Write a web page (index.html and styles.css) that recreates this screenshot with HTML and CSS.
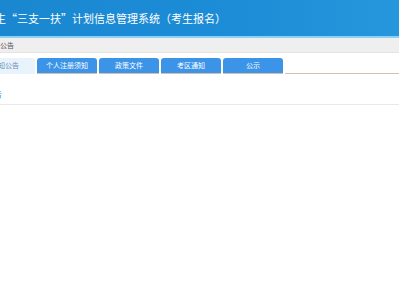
FILE: index.html
```html
<!DOCTYPE html>
<html lang="zh">
<head>
<meta charset="utf-8">
<link rel="stylesheet" href="styles.css">
</head>
<body>
<div class="page">
  <header class="header">
    <h1 class="title">生“三支一扶”计划信息管理系统（考生报名）</h1>
  </header>
  <div class="crumb">通知公告</div>
  <nav class="tabs">
    <div class="tab active">通知公告</div>
    <div class="tab">个人注册须知</div>
    <div class="tab">政策文件</div>
    <div class="tab">考区通知</div>
    <div class="tab">公示</div>
    <div class="tab-rest"></div>
  </nav>
  <section class="content">
    <div class="content-title">通知公告</div>
  </section>
</div>
</body>
</html>
```

FILE: styles.css
```css
html, body {
  margin: 0;
  padding: 0;
  background: #ffffff;
  overflow: hidden;
}
body {
  width: 399px;
  height: 300px;
  font-family: "Noto Sans CJK SC", "Noto Sans", sans-serif;
}
.page {
  margin-left: -25px;
  width: 450px;
}
.header {
  height: 36px;
  background: linear-gradient(90deg, #1a86d0 0%, #1d8dd7 60%, #2899dd 100%);
  border-bottom: 2px solid #8dd0f4;
  display: flex;
  align-items: center;
  overflow: hidden;
}
.title {
  margin: 0 0 0 20px;
  font-size: 11px;
  font-weight: 400;
  color: #ffffff;
  white-space: nowrap;
  line-height: 1;
  padding-top: 1px;
}
.crumb {
  height: 14px;
  background: #efefef;
  border-bottom: 1px solid #e4e4e4;
  font-size: 7px;
  line-height: 14px;
  color: #555;
  white-space: nowrap;
  padding-left: 11px;
}
.tabs {
  display: flex;
  align-items: flex-end;
  gap: 2px;
  margin-top: 5px;
  height: 16px;
}
.tab {
  width: 60px;
  height: 15px;
  background: #3b94e8;
  color: #ffffff;
  font-size: 7px;
  line-height: 15px;
  text-align: center;
  border-radius: 3px 3px 0 0;
  border-bottom: 1px solid #d6c0ad;
  white-space: nowrap;
}
.tab.active {
  background: #e9f3fc;
  color: #6c8fb0;
  border-bottom-color: #e9f3fc;
}
.tab-rest {
  flex: 1;
  height: 0;
  border-bottom: 1px solid #d6c0ad;
}
.content {
  margin-top: 15px;
  border-bottom: 1px solid #e9e9e9;
  height: 15px;
}
.content-title {
  font-size: 8px;
  line-height: 10px;
  color: #2d88d8;
  margin-left: -5px;
  white-space: nowrap;
}
```
